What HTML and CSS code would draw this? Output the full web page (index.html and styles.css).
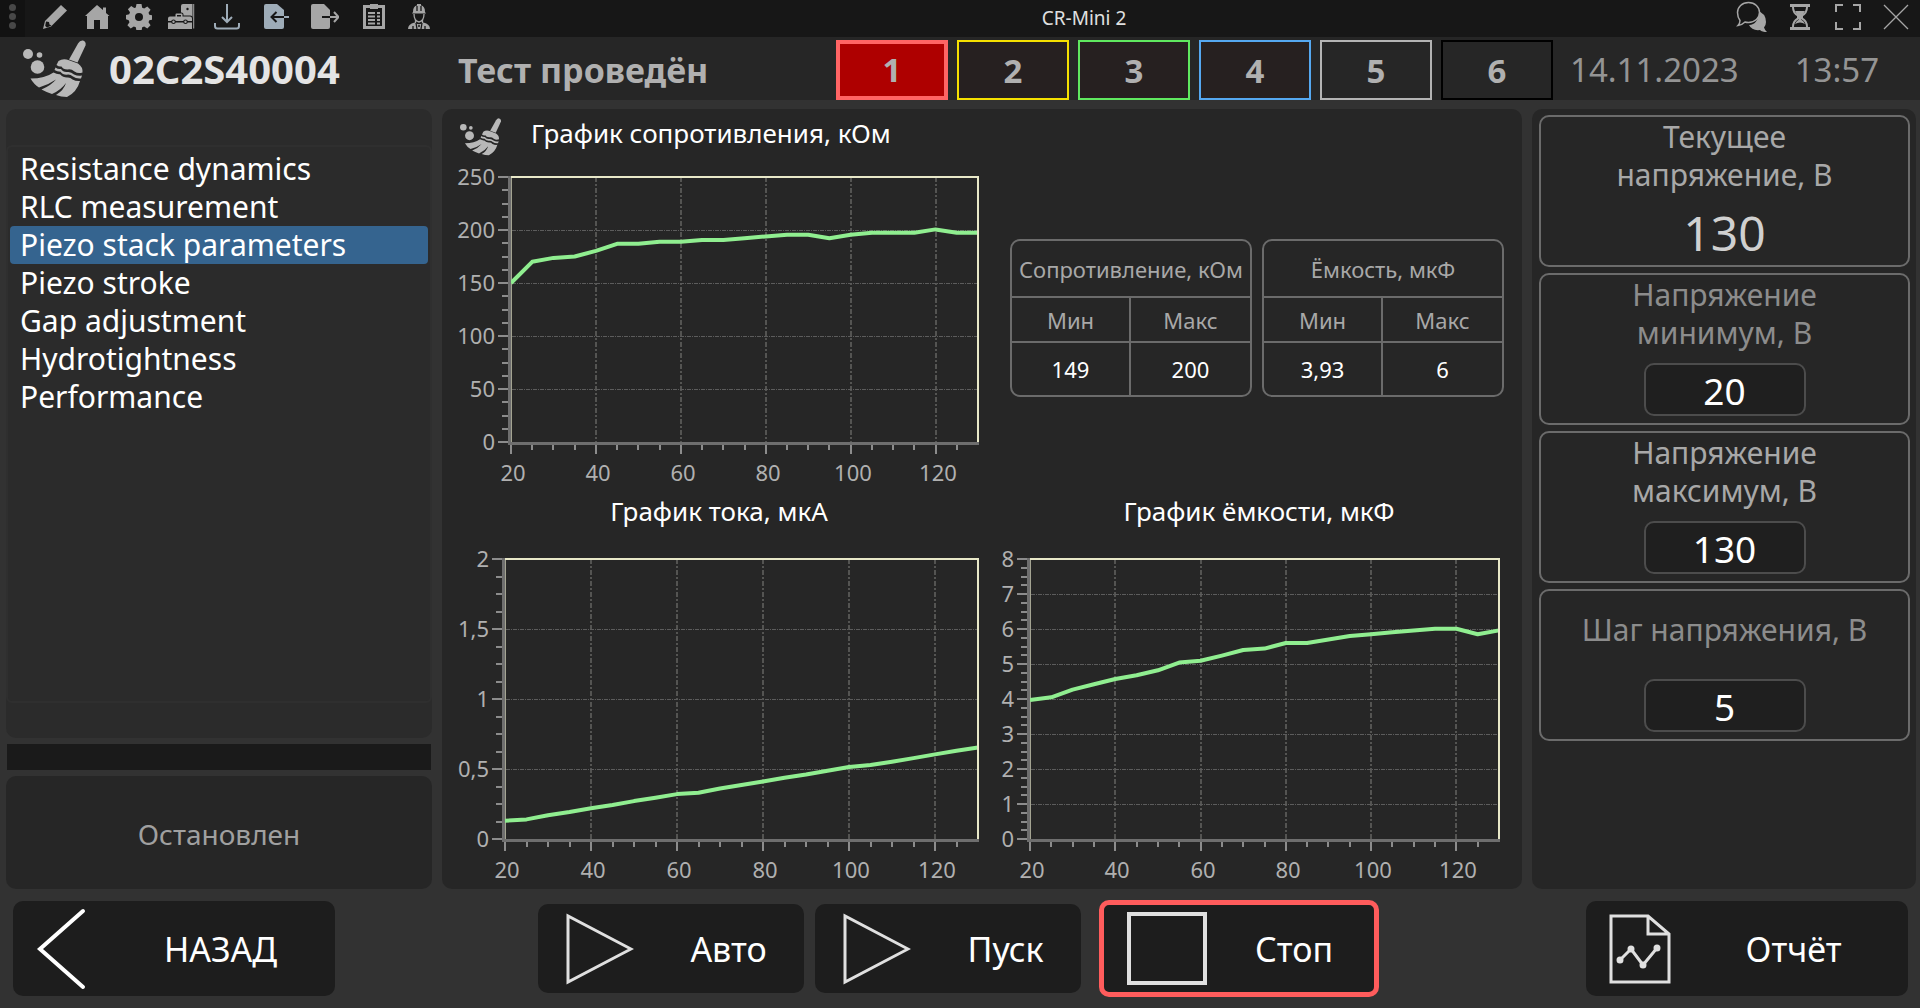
FILE: index.html
```html
<!DOCTYPE html>
<html lang="ru">
<head>
<meta charset="utf-8">
<meta name="viewport" content="width=device-width, initial-scale=1">
<title>CR-Mini 2</title>
<link rel="stylesheet" href="styles.css">
</head>
<body>
<svg class="sprite" aria-hidden="true">
  <symbol id="broom" viewBox="0 0 64 58">
    <circle cx="5" cy="14" r="5"/><circle cx="16.5" cy="15" r="2.8"/><circle cx="14.5" cy="27" r="6.8"/>
    <path d="M55 3.500Q57 .2 60 .6Q63.500 2 62.500 5.500L54.500 22.500L46 19.500Z"/>
    <path d="M33.500 25L35.500 21Q40 18 46 20.200L55 23.500Q60 27 59.500 32.500Q55 34 51.500 31.500Q48 28.500 44.500 29.500Q40 29.500 38.500 26.500Q36 27 33.500 25Z"/>
    <path d="M32.500 27.500Q35 29.500 38 29Q40 32.500 44.500 32Q48 31.500 51 34.500Q55 36.500 59 35.500L58 38.500Q53 39 50 36.500Q47 34 43.500 34.800Q39.500 34.800 37.500 31.800Q34 31.500 31.500 30Z"/>
    <path d="M30.500 32.500Q34 34.500 37 34.200Q40 37.500 44 37.500Q47 37 49.500 39.500Q53 41.500 57 41Q54 52 44 57Q38 57 33 55Q41 50 43 43Q38 50 29 54Q23 52 18.500 49.500Q28 45.500 33 39.500Q25 45 16 47.500Q11 44.500 7.500 38.500Q22 38.500 30.500 32.500Z"/>
  </symbol>
</svg>

<header class="titlebar">
  <div class="tools">
    <span class="grip"><i></i><i></i><i></i></span>
    <button class="tool" type="button" aria-label="Правка"><svg width="26" height="26" viewBox="0 0 26 26"><path d="M19 1l6 5.500L9 22.500L1 25L3 17z"/><path class="cut" d="M4 17.500l3 .500l.500 2.500l2 1L5 23.500l-1.800-1.600z"/></svg></button>
    <button class="tool" type="button" aria-label="Главная"><svg width="26" height="26" viewBox="0 0 26 26"><path d="M13 1L1 12h2v13h7v-9h6v9h8V12h1.500L22 9V3.500h-3V6z"/></svg></button>
    <button class="tool" type="button" aria-label="Настройки"><svg width="26" height="26" viewBox="0 0 26 26"><path fill-rule="evenodd" d="M10.500 0h5l.7 3.700l2 .8l3.100-2.100l3.300 3.300l-2.100 3.100l.8 2l3.700.700v4l-3.700.700l-.8 2l2.100 3.100l-3.300 3.300l-3.100-2.100l-2 .8l-.7 3.700h-5l-.7-3.700l-2-.8l-3.100 2.100l-3.300-3.300l2.100-3.100l-.8-2L-.5 15v-4l3.700-.7l.8-2L1.900 5.200L5.200 1.900l3.100 2.100l1.500-.5zM13 9a4 4 0 1 0 0 8a4 4 0 1 0 0-8z"/></svg></button>
    <button class="tool" type="button" aria-label="Оборудование"><svg width="27" height="26" viewBox="0 0 27 26"><path d="M15 0h9.500v24.500H13V2q0-2 2-2zM25.200 0h1v24.500h-1z"/><circle class="cut" cx="19.500" cy="5" r="1.200"/><path class="boxed" d="M7.500 12.500v-2q0-1 1-1h5q1 0 1 1v2H22q2 0 2 2V25H0V14.500q0-2 2-2z"/><path class="cut" d="M9 11h4v1.500H9zM0 17h24v1.500H0z"/><circle class="cut" cx="5.500" cy="17.700" r="2.300"/><circle class="cut" cx="17.500" cy="17.700" r="2.300"/><circle cx="5.500" cy="17.700" r="1.200"/><circle cx="17.500" cy="17.700" r="1.200"/></svg></button>
    <button class="tool tool-wide blue" type="button" aria-label="Загрузить"><svg width="26" height="26" viewBox="0 0 26 26"><path class="line" d="M13 0v18M8 13l5 5l5-5M1 19v3q0 2.500 2.500 2.500h19q2.500 0 2.500-2.500v-3"/></svg></button>
    <button class="tool tool-wide blue" type="button" aria-label="Импорт"><svg width="26" height="26" viewBox="0 0 26 26"><path d="M3 0h11l7 6v17q0 2-2 2H3q-2 0-2-2V2q0-2 2-2z"/><path class="cutline" d="M21 13H9M13.500 8l-5 5l5 5"/><path class="line" d="M21 13h5"/></svg></button>
    <button class="tool tool-wide" type="button" aria-label="Экспорт"><svg width="28" height="26" viewBox="0 0 28 26"><path d="M2 0h11l6 6v17q0 2-2 2H2q-2 0-2-2V2q0-2 2-2z"/><path class="cutline" d="M11 13h8"/><path class="line" d="M19 13h8M23 8l4.500 5L23 18"/></svg></button>
    <button class="tool tool-wide" type="button" aria-label="Протокол"><svg width="22" height="26" viewBox="0 0 22 26"><path class="line thick" d="M1.500 2.500h19v21h-19z"/><path d="M7 0h8v5H7z"/><path class="line" d="M5 9h7M14 9h3M5 12.500h7M14 12.500h3M5 16h7M14 16h3M5 19.500h7M14 19.500h3"/></svg></button>
    <button class="tool" type="button" aria-label="Оператор"><svg width="22" height="26" viewBox="0 0 22 26"><path d="M5 8Q5 2 9 1.500V0h4v1.500Q17 2 17 8l1 1.500H4z"/><path class="cutline thin" d="M9 2v5M13 2v5"/><path class="line thin" d="M6 10q0 7 5 8q5-1 5-8M7.500 16v4M14.500 16v4"/><path d="M0 25q0-5 6.500-6.500Q11 22 15.500 18.500Q22 20 22 25z"/><path class="cutline thin" d="M8 19l1 6M14 19l-1 6M10 22h2M5 22v3M17 22v3"/></svg></button>
  </div>
  <h1 class="app-name">CR-Mini 2</h1>
  <div class="tools window-tools">
    <button class="tool" type="button" aria-label="Чат"><svg width="32" height="32" viewBox="0 0 32 32"><path d="M20 9q10 3 10 12q0 3-2 5.500q1 3 3 4.500q-5 0-7-2q-8 1-11-5q9 0 11-15z"/><path class="line backed" d="M12.500 1.500c6.500 0 11 4.500 11 10s-4.500 10-11 10q-2 0-3.500-.5Q6 24 2 24.500q2-2 2-5Q1.500 16 1.500 11.500c0-5.500 4.500-10 11-10z"/></svg></button>
    <button class="tool" type="button" aria-label="Ожидание"><svg width="22" height="26" viewBox="0 0 22 26"><path d="M1 0h20v3H1zM1 23h20v3H1z"/><path class="line" d="M4 3q0 6 5 8.500v3Q4 17 4 23M18 3q0 6-5 8.500v3q5 2.500 5 8.500"/><path d="M6 7h10q-1 3-4 4.500v4Q15 17 16 20q-5-3-10 0q1-3 4-4.500v-4Q7 10 6 7z"/></svg></button>
    <button class="tool" type="button" aria-label="Во весь экран"><svg width="26" height="26" viewBox="0 0 26 26"><path class="line" d="M1 8V1h7M18 1h7v7M25 18v7h-7M8 25H1v-7"/></svg></button>
    <button class="tool" type="button" aria-label="Закрыть"><svg width="26" height="26" viewBox="0 0 26 26"><path class="line thin" d="M1 1l24 24M25 1L1 25"/></svg></button>
  </div>
</header>

<section class="header">
  <div class="device"><svg class="broom-large"><use href="#broom"/></svg><strong>02C2S40004</strong></div>
  <div class="test-state">Тест проведён</div>
  <nav class="slots">
    <button class="slot slot-active" type="button">1</button>
    <button class="slot slot-yellow" type="button">2</button>
    <button class="slot slot-green" type="button">3</button>
    <button class="slot slot-blue" type="button">4</button>
    <button class="slot slot-grey" type="button">5</button>
    <button class="slot slot-black" type="button">6</button>
  </nav>
  <div class="clock"><time>14.11.2023</time><time>13:57</time></div>
</section>

<main class="main">
  <aside class="side">
    <div class="list-panel">
      <ul class="list">
        <li><button type="button">Resistance dynamics</button></li>
        <li><button type="button">RLC measurement</button></li>
        <li><button type="button" class="selected">Piezo stack parameters</button></li>
        <li><button type="button">Piezo stroke</button></li>
        <li><button type="button">Gap adjustment</button></li>
        <li><button type="button">Hydrotightness</button></li>
        <li><button type="button">Performance</button></li>
      </ul>
    </div>
    <div class="bar"></div>
    <div class="run-state">Остановлен</div>
  </aside>

  <section class="charts">
    <div class="top-chart">
      <div class="chart-head"><svg class="broom-small"><use href="#broom"/></svg><h2>График сопротивления, кОм</h2></div>
      <svg class="chart" id="resistance" viewBox="0 0 554 326"></svg>
    </div>
    <div class="tables">
      <table>
        <thead><tr><th colspan="2">Сопротивление, кОм</th></tr><tr><th>Мин</th><th>Макс</th></tr></thead>
        <tbody><tr><td>149</td><td>200</td></tr></tbody>
      </table>
      <table>
        <thead><tr><th colspan="2">Ёмкость, мкФ</th></tr><tr><th>Мин</th><th>Макс</th></tr></thead>
        <tbody><tr><td>3,93</td><td>6</td></tr></tbody>
      </table>
    </div>
    <div>
      <h2 class="centered">График тока, мкА</h2>
      <svg class="chart" id="current" viewBox="0 0 554 357"></svg>
    </div>
    <div>
      <h2 class="centered">График ёмкости, мкФ</h2>
      <svg class="chart" id="capacity" viewBox="0 0 526 357"></svg>
    </div>
  </section>

  <aside class="params">
    <div class="card bright"><span class="card-label">Текущее<br>напряжение, В</span><output class="reading">130</output></div>
    <div class="card"><label class="card-label" for="vmin">Напряжение<br>минимум, В</label><input id="vmin" type="text" value="20"></div>
    <div class="card bright"><label class="card-label" for="vmax">Напряжение<br>максимум, В</label><input id="vmax" type="text" value="130"></div>
    <div class="card"><label class="card-label" for="vstep">Шаг напряжения, В</label><input id="vstep" type="text" value="5"></div>
  </aside>
</main>

<footer class="footer">
  <button class="action action-wide" type="button"><svg width="62" height="82" viewBox="0 0 62 82"><path class="back" d="M47 3L4 41L47 79"/></svg><span>НАЗАД</span></button>
  <div class="run">
    <button class="action" type="button"><svg width="68" height="74" viewBox="0 0 68 74"><path d="M2 4v66L65 37z"/></svg><span>Авто</span></button>
    <button class="action" type="button"><svg width="68" height="74" viewBox="0 0 68 74"><path d="M2 4v66L65 37z"/></svg><span>Пуск</span></button>
    <button class="action stop" type="button"><svg width="80" height="73" viewBox="0 0 80 73"><path class="heavy" d="M2 2h76v69H2z"/></svg><span>Стоп</span></button>
  </div>
  <button class="action action-wide" type="button"><svg width="62" height="70" viewBox="0 0 62 70"><path d="M2 2h37l21 18v48H2zM39 2v18h21"/><path class="round" d="M11 46L22 35L34 51L48 34"/><circle cx="11" cy="46" r="2"/><circle cx="22" cy="35" r="2"/><circle cx="34" cy="51" r="2"/><circle cx="48" cy="34" r="2"/></svg><span>Отчёт</span></button>
</footer>
<script src="charts.js"></script>
</body>
</html>
```

FILE: styles.css
```css
* { box-sizing: border-box; }
body {
  margin: 0;
  min-height: 100vh;
  display: flex;
  flex-direction: column;
  background: #323232;
  color: #fff;
  font-family: "Noto Sans", "Open Sans", sans-serif;
}
button, input { font: inherit; color: inherit; }
button { margin: 0; padding: 0; border: 0; background: none; cursor: pointer; }
h1, h2 { margin: 0; font-weight: 400; }
svg { display: block; flex: none; }
.sprite { position: absolute; width: 0; height: 0; }

/* Title bar */
.titlebar {
  display: grid;
  grid-template-columns: auto 1fr auto;
  height: 37px;
  background: #171717;
}
.app-name { font-size: 19px; line-height: 36px; text-align: center; color: #e0e0e0; }
.tools { display: flex; color: #a6a6a6; }
.grip {
  display: flex;
  flex-direction: column;
  align-items: center;
  gap: 2px;
  width: 25px;
  margin-right: 9px;
  padding-top: 4px;
  background: #121212;
}
.grip i { width: 7px; height: 7px; border-radius: 50%; background: #484848; }
.tool { display: flex; align-items: center; justify-content: center; width: 42px; height: 33px; }
.tool-wide { width: 49px; }
.window-tools .tool { width: 48px; }
.blue { color: #9eacb8; }
.tool svg { fill: currentColor; }
.tool .line { fill: none; stroke: currentColor; stroke-width: 2; }
.tool .cut { fill: #171717; }
.tool .cutline { fill: none; stroke: #171717; stroke-width: 2; }
.tool .boxed { stroke: #171717; stroke-width: 2; paint-order: stroke; }
.tool .thick { stroke-width: 3; }
.tool .thin { stroke-width: 1.3; }
.tool .backed { fill: #171717; stroke-width: 1.5; }

/* Device header */
.header {
  display: grid;
  grid-template-columns: 458fr 378fr auto 367fr;
  align-items: center;
  height: 63px;
  background: #262626;
  color: #b0b0b0;
  font-size: 33px;
  line-height: 44px;
}
.device { display: flex; align-items: center; gap: 22px; padding-left: 23px; }
.device strong { font-size: 40px; color: #e4e4e4; }
.broom-large { width: 64px; height: 58px; fill: #b8b8b8; }
.broom-small { width: 42px; height: 38px; fill: #b8b8b8; align-self: flex-end; }
.test-state { padding-top: 2px; font-size: 34px; font-weight: 700; }
.slots { display: flex; gap: 9px; align-self: end; }
.slot {
  width: 112px;
  height: 60px;
  padding-top: 2px;
  border: 2px solid;
  background: #262020;
  color: #b0b0b0;
  font-weight: 700;
}
.slot-active { padding: 0; background: #ae0000; border: 4px solid #ff6464; }
.slot-yellow { border-color: #f5e000; }
.slot-green { border-color: #5fe85f; }
.slot-blue { border-color: #55a8f0; }
.slot-grey { border-color: #b4b4b4; background: #262626; }
.slot-black { border-color: #000; background: #262626; }
.clock { display: flex; gap: 56px; padding: 2px 0 0 17px; color: #949494; }

/* Working area */
.main {
  flex: 1;
  display: grid;
  grid-template-columns: 426fr 1080fr 384fr;
  gap: 10px;
  padding: 9px 4px 0 6px;
}
.side { display: flex; flex-direction: column; gap: 6px; }
.list-panel {
  flex: 1;
  display: flex;
  padding: 36px 0 35px;
  border-radius: 10px;
  background: #2b2b2b;
}
.list {
  flex: 1;
  margin: 0;
  padding: 3px 2px;
  border: 2px solid #2f2f2f;
  border-radius: 6px;
  list-style: none;
  font-size: 30px;
  line-height: 38px;
}
.list button { display: block; width: 100%; height: 38px; padding: 0 10px; border-radius: 4px; text-align: left; }
.list .selected { background: #35648f; }
.bar { height: 26px; margin: 0 1px; background: #1a1a1a; }
.run-state {
  display: flex;
  align-items: center;
  justify-content: center;
  height: 113px;
  padding-top: 2px;
  border-radius: 10px;
  background: #262626;
  color: #a0a0a0;
  font-size: 28px;
}

/* Charts */
.charts {
  display: grid;
  grid-template-columns: 554fr 526fr;
  align-content: start;
  border-radius: 10px;
  background: #262626;
}
.charts h2 { font-size: 26px; line-height: 42px; }
.charts .centered { text-align: center; }
.chart-head { display: flex; align-items: center; gap: 29px; height: 47px; margin-bottom: 8px; padding-left: 18px; }
.chart { width: 100%; height: auto; fill: none; overflow: visible; }
.chart text { fill: #b0b0b0; font-size: 22px; }
.chart .tick { stroke: #8c8c8c; stroke-width: 2; }
.chart .axis { stroke: #6e6e6e; stroke-width: 3; }
.chart .frame { stroke: #e8e8c8; stroke-width: 2; }
.chart .edge { stroke: #a4a492; stroke-width: 1; }
.chart .grid-v { stroke: #545452; stroke-width: 2; stroke-dasharray: 5 2 2 2; }
.chart .grid-h { stroke: #5c5c5c; stroke-width: 1; stroke-dasharray: 4 1 1 1; }
.chart .series { stroke: #90ee90; stroke-width: 4; stroke-linejoin: round; }

.tables { display: flex; align-items: flex-start; gap: 10px; padding: 130px 18px 0 14px; }
table {
  flex: 1;
  width: 100%;
  table-layout: fixed;
  border: 2px solid #6b6b6b;
  border-radius: 10px;
  border-spacing: 0;
  font-size: 22px;
  line-height: 30px;
  text-align: center;
}
th { padding: 0; border-bottom: 2px solid #6b6b6b; color: #a8a8a8; font-weight: 400; white-space: nowrap; }
td { height: 52px; padding: 0; }
thead tr:first-child th { height: 57px; }
thead tr:last-child th { height: 45px; }
tr > :first-child:not([colspan]) { border-right: 2px solid #6b6b6b; }

/* Parameters */
.params {
  display: flex;
  flex-direction: column;
  gap: 6px;
  padding: 6px 6px 0 7px;
  border-radius: 10px;
  background: #262626;
}
.card {
  display: flex;
  flex-direction: column;
  align-items: center;
  gap: 10px;
  height: 152px;
  border: 2px solid #6b6b6b;
  border-radius: 10px;
  color: #8c8c8c;
}
.bright { color: #a8a8a8; }
.card-label {
  display: flex;
  flex-direction: column;
  justify-content: center;
  height: 78px;
  font-size: 30px;
  line-height: 38px;
  text-align: center;
}
.reading { font-size: 48px; line-height: 56px; color: #d0d0d0; }
.card input {
  width: 162px;
  height: 53px;
  padding: 2px 0 0;
  border: 2px solid #4c4c4c;
  border-radius: 10px;
  background: #1f1f1f;
  color: #fff;
  font-size: 37px;
  text-align: center;
}

/* Actions */
.footer { display: flex; align-items: center; justify-content: space-between; padding: 11px 12px 11px 13px; }
.run { display: flex; align-items: center; gap: 11px; padding-right: 5px; }
.action {
  display: flex;
  align-items: center;
  width: 266px;
  height: 89px;
  padding-left: 28px;
  border-radius: 10px;
  background: #1d1d1d;
  font-size: 34px;
}
.action span { flex: 1; padding-left: 20px; text-align: center; }
.action svg { fill: none; stroke: #e0e0e0; stroke-width: 3; }
.action circle { fill: #e0e0e0; }
.action .heavy { stroke-width: 4; }
.action .round { stroke-linecap: round; stroke-linejoin: round; }
.action .back { stroke: #fff; stroke-width: 4; stroke-linecap: round; }
.action-wide { width: 322px; height: 95px; padding-left: 23px; }
.stop { width: 280px; height: 97px; margin-left: 7px; padding-left: 23px; border: 5px solid #ff5c5c; }
.action-wide span, .stop span { padding-left: 8px; }
```

FILE: charts.js
```js
const NS = 'http://www.w3.org/2000/svg';

function drawChart(id, o) {
  const svg = document.getElementById(id);
  const add = (name, cls, attrs, text) => {
    const el = document.createElementNS(NS, name);
    if (cls) el.setAttribute('class', cls);
    for (const k in attrs) el.setAttribute(k, attrs[k]);
    if (text) el.textContent = text;
    svg.appendChild(el);
  };
  const line = (cls, x1, y1, x2, y2) => add('line', cls, { x1, y1, x2, y2 });
  const X = v => o.left + (v - 20) / 110 * (o.right - o.left);
  const Y = v => o.bottom - v / o.max * (o.bottom - o.top);

  for (let v = 20; v < 130; v += 5) {
    const major = v % 20 === 0;
    const x = Math.round(X(v));
    line('tick', x, o.bottom + 3, x, o.bottom + (major ? 12 : 8));
    if (major) {
      if (v > 20) line('grid-v', x, o.top, x, o.bottom);
      add('text', '', { x: x + 2, y: o.bottom + 39, 'text-anchor': 'middle' }, String(v));
    }
  }
  const count = o.max / o.step * 4;
  for (let i = 0; i <= count; i++) {
    const v = i * o.step / 4;
    const major = i % 4 === 0;
    const y = Math.round(Y(v));
    line('tick', o.left - (major ? 13 : 9), y, o.left - 3, y);
    if (major) {
      if (i > 0 && i < count) line('grid-h', o.left + 1, y + 0.5, o.right - 1, y + 0.5);
      add('text', '', { x: o.left - 16, y: y + 8, 'text-anchor': 'end' }, String(v).replace('.', ','));
    }
  }
  line('edge', o.left + 0.5, o.top, o.left + 0.5, o.bottom);
  add('polyline', 'series', {
    points: o.data.map((v, i) => `${(X(20 + i * 5)).toFixed(1)},${Y(v).toFixed(1)}`).join(' ')
  });
  add('polyline', 'frame', { points: `${o.left},${o.top} ${o.right},${o.top} ${o.right},${o.bottom}` });
  line('axis', o.left - 1.5, o.top - 1, o.left - 1.5, o.bottom + 3);
  line('axis', o.left - 3, o.bottom + 1.5, o.right + 1, o.bottom + 1.5);
}

drawChart('resistance', {
  left: 69, right: 536, top: 13, bottom: 278, max: 250, step: 50,
  data: [150, 170, 173.7, 175, 180.3, 187, 187, 189, 189, 190.7, 190.7, 192.3, 194, 195.5, 195.5, 192.3, 195.5, 197.4, 197.4, 197.4, 200.6, 197.4, 197.4]
});
drawChart('current', {
  left: 63, right: 536, top: 27, bottom: 307, max: 2, step: 0.5,
  data: [0.13, 0.14, 0.17, 0.193, 0.219, 0.243, 0.271, 0.295, 0.321, 0.331, 0.361, 0.385, 0.411, 0.438, 0.461, 0.487, 0.514, 0.528, 0.552, 0.578, 0.604, 0.63, 0.654]
});
drawChart('capacity', {
  left: 34, right: 503, top: 27, bottom: 307, max: 8, step: 1,
  data: [3.97, 4.05, 4.27, 4.42, 4.57, 4.68, 4.82, 5.04, 5.09, 5.24, 5.4, 5.44, 5.6, 5.6, 5.7, 5.8, 5.85, 5.91, 5.96, 6.01, 6.01, 5.85, 5.96]
});
```
